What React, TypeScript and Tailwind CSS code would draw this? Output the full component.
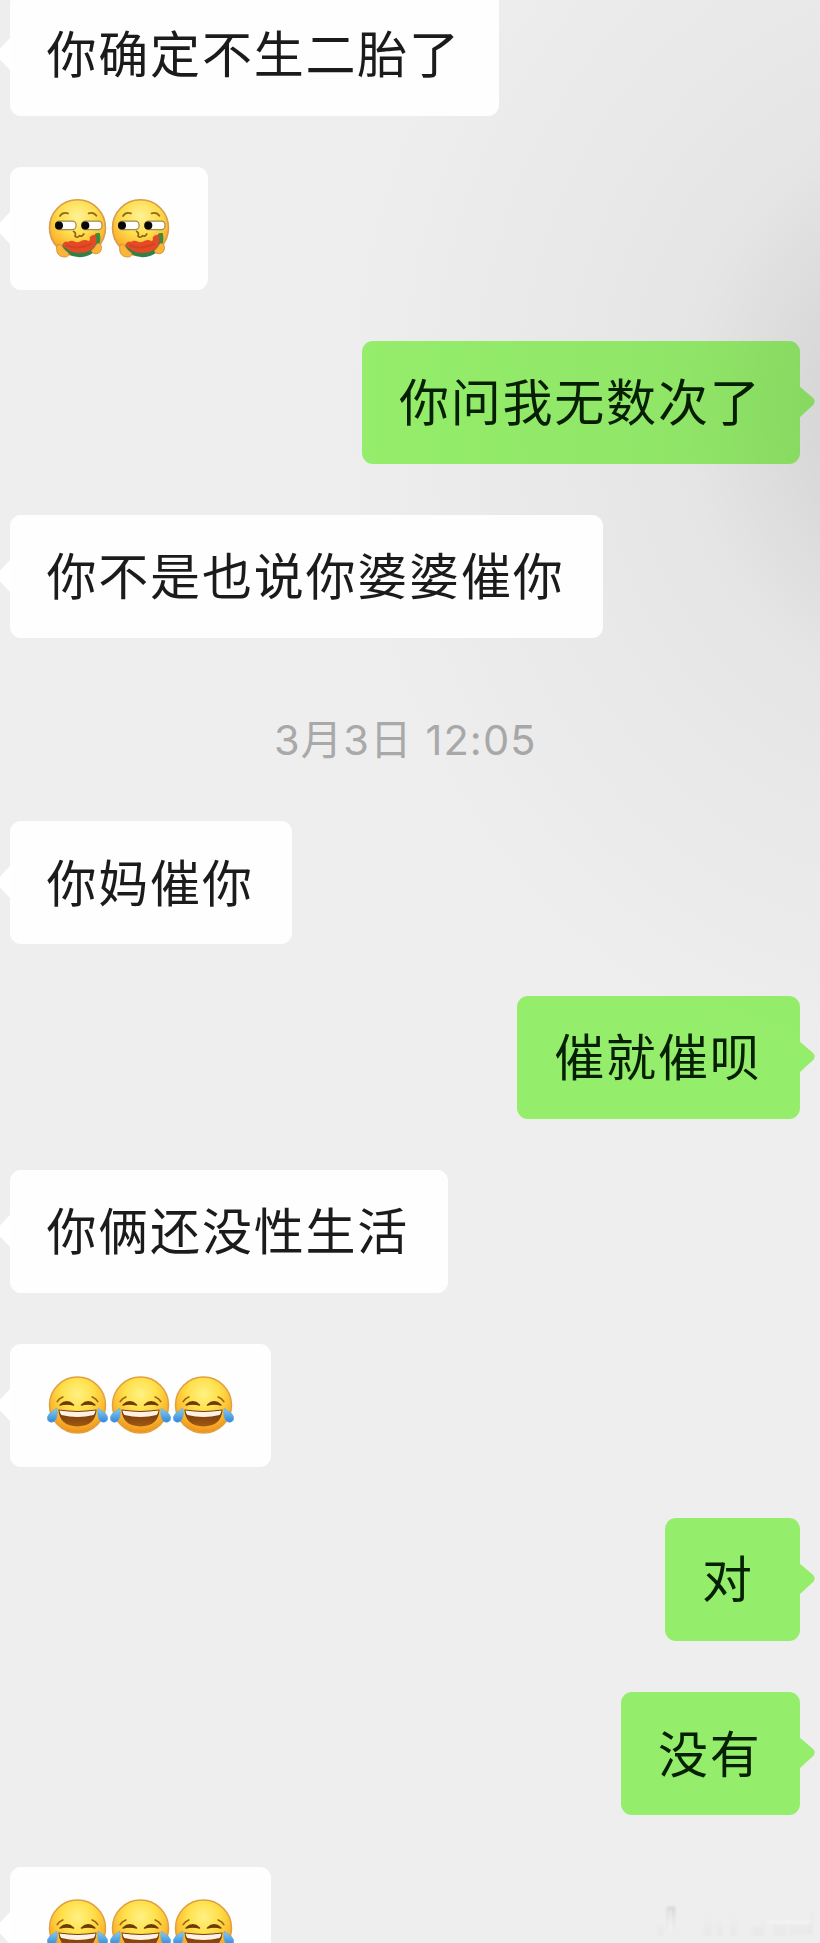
import React from "react";

type Emoji = "melon" | "joy";
type Item =
  | { kind: "text"; side: "in" | "out"; text: string }
  | { kind: "emoji"; emoji: Emoji; count: number }
  | { kind: "time"; text: string };

const items: Item[] = [
  { kind: "text", side: "in", text: "你确定不生二胎了" },
  { kind: "emoji", emoji: "melon", count: 2 },
  { kind: "text", side: "out", text: "你问我无数次了" },
  { kind: "text", side: "in", text: "你不是也说你婆婆催你" },
  { kind: "time", text: "3月3日 12:05" },
  { kind: "text", side: "in", text: "你妈催你" },
  { kind: "text", side: "out", text: "催就催呗" },
  { kind: "text", side: "in", text: "你俩还没性生活" },
  { kind: "emoji", emoji: "joy", count: 3 },
  { kind: "text", side: "out", text: "对" },
  { kind: "text", side: "out", text: "没有" },
  { kind: "emoji", emoji: "joy", count: 3 },
];

function Gradients() {
  return (
    <svg className="absolute h-0 w-0" aria-hidden="true">
      <defs>
        <radialGradient id="face" cx="0.5" cy="0.3" r="0.72">
          <stop offset="0" stopColor="#fff184" />
          <stop offset="0.4" stopColor="#ffe04a" />
          <stop offset="0.72" stopColor="#fbb92e" />
          <stop offset="1" stopColor="#ec8a18" />
        </radialGradient>
        <radialGradient id="melonFace" cx="0.5" cy="0.3" r="0.75">
          <stop offset="0" stopColor="#fff296" />
          <stop offset="0.45" stopColor="#ffdd4c" />
          <stop offset="0.75" stopColor="#fab732" />
          <stop offset="1" stopColor="#ee941e" />
        </radialGradient>
        <linearGradient id="tear" x1="0" y1="0" x2="0" y2="1">
          <stop offset="0" stopColor="#8ccdf2" />
          <stop offset="1" stopColor="#2f86d6" />
        </linearGradient>
        <linearGradient id="mouth" x1="0" y1="0" x2="0" y2="1">
          <stop offset="0" stopColor="#6a3208" />
          <stop offset="1" stopColor="#a35a12" />
        </linearGradient>
      </defs>
    </svg>
  );
}

function JoyFace() {
  return (
    <svg viewBox="0 0 63 63" className="h-[63px] w-[63px] shrink-0 overflow-visible" role="img">
      <circle cx="30.5" cy="31" r="28" fill="url(#face)" stroke="#e0a040" strokeWidth="1.5" />
      <path d="M10.2 27.6 Q12 24.4 15.8 23 M50.8 27.6 Q49 24.4 45.2 23" fill="none" stroke="#a06614" strokeWidth="1.7" strokeLinecap="round" />
      <path d="M13 31 Q19.8 24.6 26.6 31 Q19.8 29.3 13 31Z M34.4 31 Q41.2 24.6 48 31 Q41.2 29.3 34.4 31Z" fill="#6e3b08" stroke="#6e3b08" strokeWidth="1.3" strokeLinejoin="round" />
      <path d="M11.4 35.6 Q30.5 38.4 49.6 35.6 Q48.4 52.4 30.5 52.4 Q12.6 52.4 11.4 35.6Z" fill="url(#mouth)" />
      <path d="M12.4 36.6 Q30.5 39.4 48.6 36.6 Q48.2 39.8 46.6 41 Q30.5 45 14.4 41 Q12.8 39.8 12.4 36.6Z" fill="#fff2e4" />
      <path d="M9.8 34.2 Q11.4 44 7.2 47.4 Q3.4 49.6 .9 46.6 Q-1 42.8 2.8 39.2 Q5.6 37 9.8 34.2Z" fill="url(#tear)" stroke="#5aa9e2" strokeWidth="0.6" />
      <path d="M51.2 34.2 Q49.6 44 53.8 47.4 Q57.6 49.6 60.1 46.6 Q62 42.8 58.2 39.2 Q55.4 37 51.2 34.2Z" fill="url(#tear)" stroke="#5aa9e2" strokeWidth="0.6" />
    </svg>
  );
}

function MelonFace() {
  return (
    <svg viewBox="0 0 63 63" className="h-[63px] w-[63px] shrink-0 overflow-visible" role="img">
      <circle cx="30.5" cy="30.8" r="28" fill="url(#melonFace)" stroke="#d99c4c" strokeWidth="1.6" />
      <path d="M13 19 Q15.6 14.8 21 16.4 M41.6 16.4 Q46.6 14.6 49.4 18.8" fill="none" stroke="#8d6a1c" strokeWidth="1.8" strokeLinecap="round" />
      <rect x="8.6" y="24.2" width="20.4" height="8.4" rx="3.6" fill="#fff" stroke="#a08c4a" strokeWidth="1.2" />
      <rect x="34.8" y="24.2" width="20.2" height="8.4" rx="3.6" fill="#fff" stroke="#a08c4a" strokeWidth="1.2" />
      <circle cx="12" cy="28.4" r="4" fill="#080808" />
      <circle cx="38.3" cy="28.4" r="4" fill="#080808" />
      <path d="M26.6 34.4 Q29.4 35.8 28 39.2 Q30.4 41.6 32.4 38.6 Q34.6 40.4 36.8 37" fill="none" stroke="#8a6414" strokeWidth="1.7" strokeLinecap="round" strokeLinejoin="round" />
      <path d="M14.6 48.4 Q20 59.8 32.4 60.2 Q46 60 51.6 49 Q54.6 42 52.4 36 L48.4 36.6 L46 45Z" fill="#2f8148" />
      <path d="M15.2 47.4 Q17.6 43.6 21 45 Q24.4 42.4 28 44.8 Q31.4 46 34.6 43.8 Q38 42 41.4 44 Q43.6 44 42.6 40.6 Q44.6 37 48.8 37.8 L49.4 46 Q46 55.6 33 56 Q21 55.6 15.2 47.4Z" fill="#e54a26" />
      <path d="M49 36.8 L52.4 36 Q54 41.8 51.8 46.6 L49 46Z" fill="#3f8a3e" />
      <path d="M20 48.5 Q31 53 44 47" fill="none" stroke="#c93c18" strokeWidth="2" strokeLinecap="round" opacity="0.55" />
      <path d="M10.4 47.6 Q13.4 46 15.2 49.6 Q17.4 53.6 21.4 56 Q22.6 59.6 18 60 Q11.6 60 10 54.8 Q9 49.6 10.4 47.6Z" fill="#fbb638" stroke="#dc9236" strokeWidth="1" />
      <path d="M51.6 46.4 Q54.6 46.8 54.4 51.4 Q54 56 49.2 56.8 Q44.4 56.4 44.6 53.6 Q47.6 51.4 48.8 48.6 Q49.6 46.4 51.6 46.4Z" fill="#fbb638" stroke="#dc9236" strokeWidth="1" />
    </svg>
  );
}

function Tail({ side }: { side: "in" | "out" }) {
  return side === "in" ? (
    <svg viewBox="0 0 15 34" className="absolute top-[44px] -left-[14px] h-[34px] w-[15px] fill-white">
      <path d="M15 0 L2 13.5 Q-.8 17 2 20.5 L15 34Z" />
    </svg>
  ) : (
    <svg viewBox="0 0 16 32" className="absolute top-[45px] -right-[15px] h-[32px] w-[16px] fill-[#95ee6b]">
      <path d="M0 0 L13.6 11.6 Q17.6 15.6 13.6 19.6 L0 32Z" />
    </svg>
  );
}

function Bubble({ side, children }: { side: "in" | "out"; children: React.ReactNode }) {
  const tone = side === "in" ? "z-10 bg-[#fefefe] text-[#1b1b1b]" : "bg-[#95ee6b] text-[#062003]";
  return (
    <div className={side === "in" ? "flex justify-start" : "flex justify-end"}>
      <div className={`relative flex h-[123px] min-w-[135px] items-center rounded-[11px] pr-[35px] pl-[37px] ${tone}`}>
        <Tail side={side} />
        {children}
      </div>
    </div>
  );
}

export default function App() {
  return (
    <div className="relative h-[1943px] w-[820px] overflow-hidden bg-[#eeeeee] font-['Noto_Sans_CJK_SC',sans-serif]">
      <Gradients />
      <div className="-mt-[7.5px] flex flex-col gap-[51.2px] pr-[20px] pl-[9.5px]">
        {items.map((item, i) => {
          if (item.kind === "time") {
            return (
              <div key={i} className="flex h-[81px] items-center justify-center pt-[22px] pl-[1px] font-['Inter','Noto_Sans_CJK_SC',sans-serif] text-[41.5px] leading-none tracking-[1.1px] whitespace-pre text-[#a9a9a9]">
                {item.text}
              </div>
            );
          }
          if (item.kind === "emoji") {
            return (
              <Bubble key={i} side="in">
                <div className="flex">
                  {Array.from({ length: item.count }, (_, n) =>
                    item.emoji === "joy" ? <JoyFace key={n} /> : <MelonFace key={n} />,
                  )}
                </div>
              </Bubble>
            );
          }
          return (
            <Bubble key={i} side={item.side}>
              <span className="pr-[3.5px] pb-[6.5px] text-[50px] leading-none tracking-[1.8px] whitespace-nowrap">{item.text}</span>
            </Bubble>
          );
        })}
      </div>
      <div className="pointer-events-none absolute inset-0 bg-[radial-gradient(ellipse_600px_680px_at_940px_410px,rgba(0,0,0,0.13)_0%,rgba(0,0,0,0.09)_22%,rgba(0,0,0,0.04)_42%,rgba(0,0,0,0.022)_62%,rgba(0,0,0,0.012)_85%,rgba(0,0,0,0)_100%)]" />
      <svg viewBox="0 0 180 48" className="absolute right-0 bottom-0 h-[48px] w-[180px] opacity-70 blur-[1.5px]" aria-hidden="true">
        <defs>
          <linearGradient id="fadeDown" x1="0" y1="0" x2="0" y2="1">
            <stop offset="0" stopColor="#dedede" stopOpacity="0" />
            <stop offset="1" stopColor="#dcdcdc" />
          </linearGradient>
          <linearGradient id="fadeUp" x1="0" y1="0" x2="0" y2="1">
            <stop offset="0" stopColor="#c0c0c0" />
            <stop offset="1" stopColor="#dedede" stopOpacity="0" />
          </linearGradient>
        </defs>
        <path d="M17 30h7v11h-7z M64 22h8v19h-8z M76 24h7v17h-7z M90 22h7v19h-7z M112 30h12v11h-12z M134 28h12v13h-12z M150 28h22v12h-22z" fill="url(#fadeDown)" opacity="0.5" />
        <path d="M27 12h8v26h-8z" fill="url(#fadeUp)" />
        <path d="M29.5 14h2v22h-2z M128 26h45v2h-45z" fill="#fbfbfb" />
        <path d="M171.5 18v20" stroke="#dadada" strokeWidth="1" />
      </svg>
    </div>
  );
}
